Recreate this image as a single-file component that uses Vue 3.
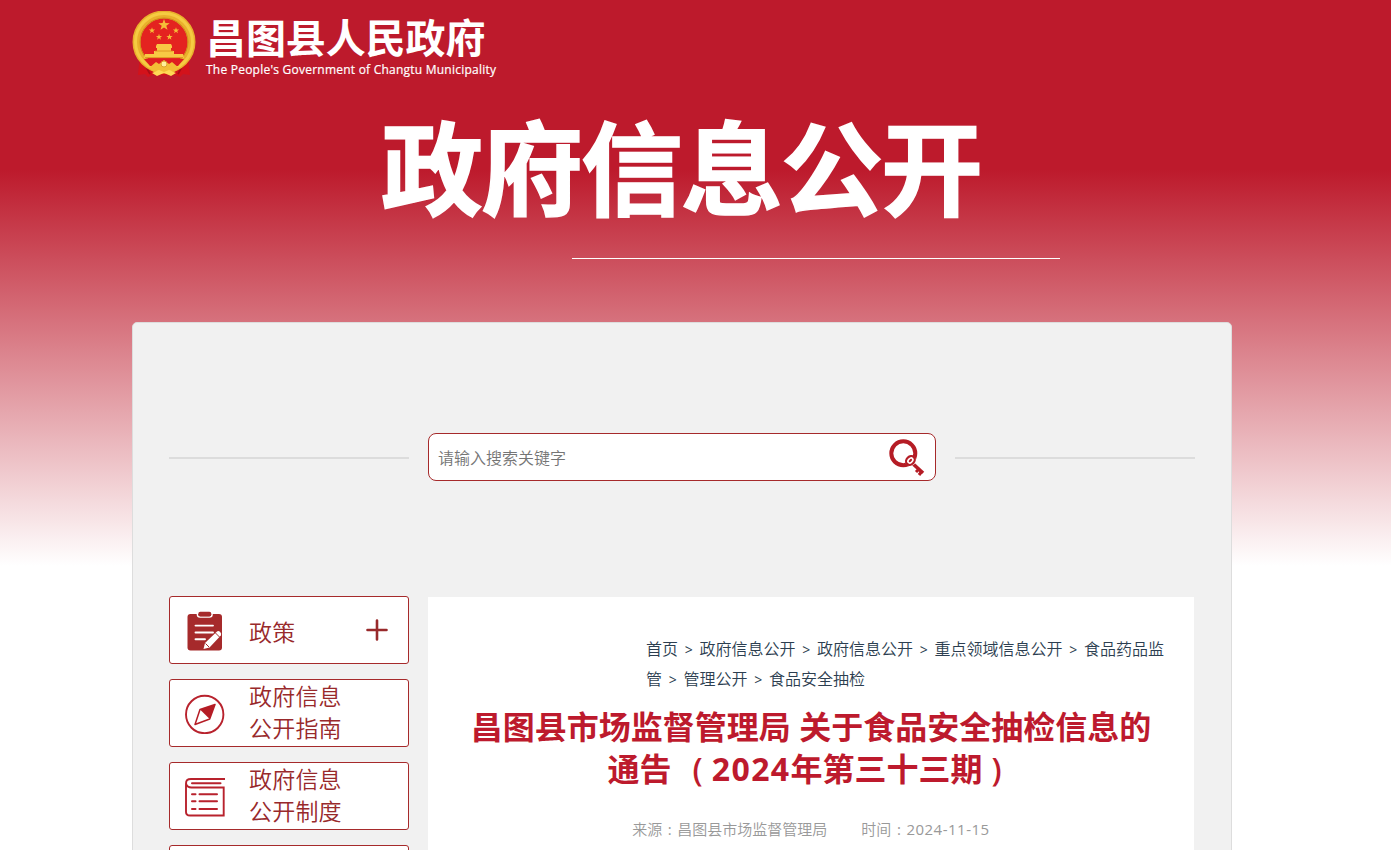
<template>
  <div class="page">
    <header class="header">
      <a class="brand" href="#">
        <svg class="emblem" viewBox="0 0 64 66" aria-hidden="true">
          <path d="M8 44 6 64l7-1 3 3 9-4 7 3 7-3 9 4 3-3 7 1-2-20z" fill="#d3121b" />
          <path d="M12 52l6 11M52 52l-6 11" stroke="#a80d16" stroke-width="1.6" />
          <circle cx="32" cy="31" r="27.5" fill="#e42320" stroke="#e9b02c" stroke-width="8" />
          <circle cx="32" cy="31" r="28.5" fill="none" stroke="#f5cb42" stroke-width="3" />
          <circle cx="32" cy="31" r="24" fill="none" stroke="#c98416" stroke-width=".8" />
          <path :d="star(32, 14, 6)" fill="#f5bd38" />
          <path v-for="s in smallStars" :key="s.join()" :d="star(s[0], s[1], 3.3)" fill="#f5bd38" />
          <path d="M24 35l1-2h14l1 2v2h-1v3h3v3h9l1 4H12l1-4h9v-3h3v-3h-1z" fill="#f8c944" />
          <path d="M13 46.6h38M23 40h18" stroke="#d88b1b" stroke-width=".8" />
          <path d="M12 48h40l-6 7H18z" fill="#df1d20" />
          <path d="M17 57l7-6 3 2 5-4 5 4 3-2 7 6-5 4-4-2-6 3-6-3-4 2z" fill="#f3bd36" />
          <circle cx="32" cy="53" r="3" fill="#fff09a" stroke="#dda32c" />
          <path d="M20 62l7-3 5 2 5-2 7 3-5 3-7-3-7 3z" fill="#ffd955" />
        </svg>
        <span class="brandText">
          <strong class="brandName">昌图县人民政府</strong>
          <span class="brandSub">The People's Government of Changtu Municipality</span>
        </span>
      </a>
      <h1 class="headline">政府信息公开</h1>
      <div class="headLine"></div>
    </header>

    <main class="panel">
      <div class="searchRow">
        <i class="rule"></i>
        <form class="search" @submit.prevent>
          <input v-model="keyword" class="searchInput" type="text" placeholder="请输入搜索关键字" />
          <button class="searchBtn" aria-label="搜索">
            <svg viewBox="0 0 36 37" width="36" height="37" fill="none" stroke="#b51c25">
              <circle cx="14.3" cy="14.3" r="12" stroke-width="4" />
              <path d="M22 23l12 11" stroke-width="3.6" />
              <path d="M30 30l-3 3M33 32l-3 4" stroke-width="3" />
              <circle cx="21.4" cy="21.5" r="4.4" fill="#fff" stroke="#fff" stroke-width="2" />
              <ellipse cx="21.4" cy="21.5" rx="4.8" ry="3.8" transform="rotate(-45 21.4 21.5)" fill="#fff" stroke-width="2.2" />
              <ellipse cx="21.4" cy="21.5" rx="2" ry="1.200" transform="rotate(-45 21.4 21.5)" fill="#b51c25" stroke="none" />
            </svg>
          </button>
        </form>
        <i class="rule"></i>
      </div>

      <div class="content">
        <nav class="side">
          <a v-for="item in menu" :key="item.icon" class="sideItem" href="#">
            <span class="sideIcon">
              <svg v-if="item.icon === 'policy'" width="40" height="40" viewBox="0 0 40 40">
                <rect x="2.500" y="3" width="34.500" height="36.500" rx="3" fill="#a62a2b" />
                <path d="M12.500 1.500v2q0 2.500 2.500 2.500h9.500q2.500 0 2.500-2.500v-2" fill="none" stroke="#fff" stroke-width="1.600" />
                <rect x="13.300" y=".8" width="13" height="4.600" rx="2" fill="#a62a2b" />
                <path d="M10.500 14.600h17.500M10.500 21.500h17.500M10.500 28.300h9.500" stroke="#fff" stroke-width="1.900" stroke-linecap="round" />
                <path d="M18.500 38l1.500-6L32 20.500q1.500-1 3.200.6t.6 3.400L24.500 36.500z" fill="#fff" />
                <path d="M20.500 32.500l3.500 3.500M30.500 22l4 4" stroke="#a62a2b" stroke-width="1" />
              </svg>
              <svg v-else-if="item.icon === 'guide'" width="40" height="40" viewBox="0 0 40 40">
                <circle cx="19.700" cy="20.500" r="18.700" fill="none" stroke="#b8222d" stroke-width="1.900" />
                <path d="M30 10.500L15 15.500l9.700 9.500z" fill="#b51c25" />
                <path d="M30 10.500L15 15.500 10 30.500l14.700-5.500z" fill="none" stroke="#b51c25" stroke-width="1.500" stroke-linejoin="round" />
              </svg>
              <svg v-else-if="item.icon === 'rules'" width="40" height="40" viewBox="0 0 40 40" fill="none" stroke="#b8222d" stroke-width="1.900">
                <path d="M40 2H6Q1 2 1 6.500V35q0 3.500 4 3.500h33.700V10.500H6.500Q2 10.500 1 6.500" />
                <path d="M7 6.300h28.500" stroke-width="2" stroke-linecap="round" />
                <path d="M7 17.300h3.500M14.500 17.300h17.500M7 24.300h3.500M14.500 24.300h17.500M7 32h3.500M14.500 32h17.500" stroke-width="2" stroke-linecap="round" />
              </svg>
            </span>
            <span class="sideText">
              <span v-for="line in item.lines" :key="line">{{ line }}</span>
            </span>
            <svg v-if="item.more" class="plus" width="22" height="22" viewBox="0 0 22 22">
              <path d="M11 1.500v19M1.500 11h19" stroke="#98292b" stroke-width="2.600" stroke-linecap="round" />
            </svg>
          </a>
        </nav>

        <article class="article">
          <div class="crumbs">
            <template v-for="(c, i) in crumbs" :key="i">
              <span v-if="i" class="sep">&gt;</span><a href="#">{{ c }}</a>
            </template>
          </div>
          <h2 class="title">
            <span>昌图县市场监督管理局 关于食品安全抽检信息的</span>
            <span>通告 <i class="paren open">(</i><b>2024</b>年第三十三期<i class="paren close">)</i></span>
          </h2>
          <div class="info">
            <span>来源<i class="colon">:</i>昌图县市场监督管理局</span>
            <span>时间<i class="colon">:</i><em>2024-11-15</em></span>
          </div>
        </article>
      </div>
    </main>
  </div>
</template>

<script setup>
import { ref } from "vue";

const keyword = ref("");

const smallStars = [[20, 19.500], [44, 19.500], [27, 26], [37.500, 26]];

const menu = [
  { icon: "policy", lines: ["政策"], more: true },
  { icon: "guide", lines: ["政府信息", "公开指南"] },
  { icon: "rules", lines: ["政府信息", "公开制度"] },
  { icon: "blank", lines: [] },
];

const crumbs = [
  "首页",
  "政府信息公开",
  "政府信息公开",
  "重点领域信息公开",
  "食品药品监管",
  "管理公开",
  "食品安全抽检",
];

// étoile à cinq branches centrée sur (cx, cy)
function star(cx, cy, r) {
  const pts = [];
  for (let i = 0; i < 10; i++) {
    const a = (Math.PI / 5) * i - Math.PI / 2;
    const d = i % 2 ? r * 0.4 : r;
    pts.push(`${(cx + d * Math.cos(a)).toFixed(2)} ${(cy + d * Math.sin(a)).toFixed(2)}`);
  }
  return `M${pts.join("L")}z`;
}
</script>

<style>
html,
body {
  margin: 0;
  height: 850px;
  overflow: hidden;
}
</style>

<style scoped>
.page {
  box-sizing: border-box;
  height: 850px;
  padding-left: 132px;
  overflow: hidden;
  background: linear-gradient(180deg, #bd1a2c 0, #bd1a2c 170px, #fff 566px);
  font-family: "Open Sans", "Noto Sans CJK SC", sans-serif;
}
a { color: inherit; text-decoration: none; }
i, em { font-style: normal; }

.header {
  width: 1100px;
  height: 322px;
  color: #fff;
}
.brand {
  display: flex;
  height: 80px;
  padding-top: 11px;
  box-sizing: border-box;
}
.emblem { width: 64px; height: 66px; flex: none; }
.brandText {
  display: flex;
  flex-direction: column;
  margin-left: 10px;
}
.brandName {
  margin-top: 4px;
  height: 46px;
  font: bold 40px/42px "Noto Sans CJK SC", sans-serif;
  letter-spacing: -.1px;
  white-space: nowrap;
}
.brandSub {
  font-size: 12px;
  line-height: 18px;
  font-weight: 500;
  letter-spacing: .23px;
  white-space: nowrap;
  -webkit-text-stroke: .2px #fff;
}
.headline {
  margin: 16px 0 0;
  height: 140px;
  text-align: center;
  font: bold 102px/136px "Noto Sans CJK SC", sans-serif;
  letter-spacing: -2px;
  text-indent: -2px;
  -webkit-text-stroke: 1.500px #fff;
}
.headLine {
  width: 488px;
  height: 1px;
  margin: 22px 0 0 440px;
  background: #fff;
}

.panel {
  box-sizing: border-box;
  width: 1100px;
  height: 1400px;
  padding: 110px 36px 0;
  border: 1px solid #ddd;
  border-radius: 5px;
  background: #f1f1f1;
}
.searchRow {
  display: flex;
  align-items: center;
  justify-content: space-between;
  height: 48px;
}
.rule {
  width: 240px;
  height: 2px;
  margin-top: 2px;
  background: #dcdcdc;
}
.search {
  box-sizing: border-box;
  display: flex;
  align-items: center;
  width: 508px;
  height: 48px;
  padding: 0 8px 0 9px;
  border: 1px solid #a62a2b;
  border-radius: 8px;
  background: #fff;
}
.searchInput {
  flex: 1;
  min-width: 0;
  height: 40px;
  padding: 0;
  border: 0;
  outline: 0;
  background: none;
  font: 350 16px "Noto Sans CJK SC", sans-serif;
}
.searchInput::placeholder { color: #757575; }
.searchBtn {
  width: 38px;
  height: 37px;
  padding: 0;
  border: 0;
  background: none;
  cursor: pointer;
}
.searchBtn svg { display: block; }

.content {
  display: flex;
  gap: 19px;
  margin-top: 115px;
}
.side {
  display: flex;
  flex-direction: column;
  gap: 15px;
  width: 240px;
}
.sideItem {
  box-sizing: border-box;
  display: flex;
  align-items: center;
  height: 68px;
  padding: 0 20px 0 15px;
  border: 1px solid #a62a2b;
  border-radius: 3px;
  background: #fff;
  color: #98292b;
}
.sideIcon { width: 40px; height: 40px; margin-top: 2px; }
.sideText {
  display: flex;
  flex: 1;
  flex-direction: column;
  margin: -4px 0 0 24px;
  font: 350 23px/32px "Noto Sans CJK SC", sans-serif;
  letter-spacing: .2px;
}
.sideText span:only-child { margin-top: 5px; }

.article {
  box-sizing: border-box;
  width: 766px;
  margin-top: 1px;
  padding-top: 36px;
  background: #fff;
}
.crumbs {
  width: 530px;
  height: 60px;
  margin-left: 218px;
  font: 350 16px/30px "Noto Sans CJK SC", sans-serif;
  color: #2c3e50;
}
.sep {
  display: inline-block;
  width: 21.500px;
  text-align: center;
  font: 400 14px/20px "Open Sans", sans-serif;
}
.title {
  display: flex;
  flex-direction: column;
  align-items: center;
  margin: 13px 0 0;
  font-size: 32px;
  line-height: 42px;
  font-weight: bold;
  color: #bd1a2d;
  white-space: nowrap;
}
.title b { font-weight: 700; letter-spacing: 1.400px; }
.paren {
  display: inline-block;
  box-sizing: border-box;
  width: 32px;
  font-weight: 600;
}
.open { padding-right: 9px; text-align: right; }
.close { padding-left: 9px; }
.info {
  display: flex;
  justify-content: center;
  gap: 34px;
  margin-top: 24px;
  font-size: 15px;
  line-height: 30px;
  font-weight: 350;
  color: #999;
}
.colon {
  display: inline-block;
  width: 15px;
  text-align: center;
  font-weight: 400;
}
.info em { font-weight: 400; letter-spacing: .5px; }
</style>
